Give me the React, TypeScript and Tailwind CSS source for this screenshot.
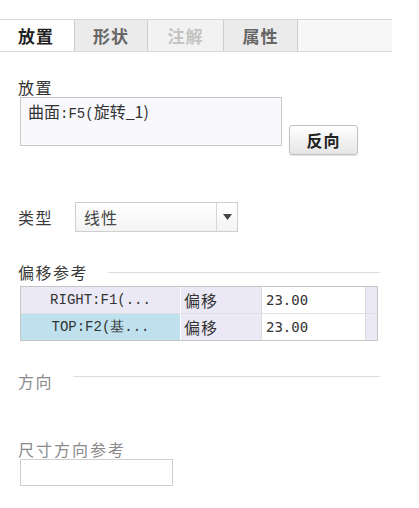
import React from 'react';

const cjk = "font-['Noto_Sans_CJK_SC',sans-serif]";

function SectionHead({ label, muted, lineTop }: { label: string; muted?: boolean; lineTop?: boolean }) {
  return (
    <div className={`flex w-[362px] ${lineTop ? 'items-start' : 'items-center'}`}>
      <span className={`text-[16px] leading-[20px] tracking-[1.5px] ${muted ? 'text-[#8a8a8a]' : 'text-[#3a3a3a]'}`}>
        {label}
      </span>
      <span className={`ml-[20px] h-px flex-1 bg-[#dcdcdc] ${lineTop ? 'mt-[5px]' : ''}`} />
    </div>
  );
}

export default function App() {
  const rows = [
    { ref: 'RIGHT:F1(...', kind: '偏移', val: '23.00', picked: false },
    { ref: 'TOP:F2(基...', kind: '偏移', val: '23.00', picked: true },
  ];

  return (
    <div className={`w-[419px] h-[508px] bg-white pt-[19px] ${cjk}`}>
      {/* Tabs */}
      <div className="flex w-[392px] h-[33px] border-t border-b border-[#d9d9d9] bg-[#f7f7f7]">
        <div className="w-[74px] bg-white pl-[18px] flex items-center text-[17px] font-bold tracking-[1px] text-[#222]">
          放置
        </div>
        <div className="w-[74px] border-l border-r border-[#cdcdcd] bg-[#ebebeb] flex items-center justify-center text-[17px] font-bold tracking-[1px] text-[#666]">
          形状
        </div>
        <div className="w-[75px] bg-[#f2f2f2] flex items-center justify-center text-[17px] font-bold tracking-[1px] text-[#c4c4c4]">
          注解
        </div>
        <div className="w-[75px] border-l border-r border-[#cdcdcd] bg-[#ebebeb] flex items-center justify-center text-[17px] font-bold tracking-[1px] text-[#666]">
          属性
        </div>
      </div>

      <div className="pl-[18px]">
        {/* Placement */}
        <div className="mt-[25px] text-[16px] leading-[20px] tracking-[1.5px] text-[#333]">放置</div>
        <div className="flex items-start ml-[2px]">
          <div className="w-[262px] h-[49px] border border-[#c9c9c9] bg-[#f9f8fd] pl-[7px] pt-[3px] text-[16px] leading-[20px] text-[#333]">
            曲面<span className="font-['Liberation_Mono',monospace] text-[14px]">:F5(</span>旋转_1)
          </div>
          <button className="mt-[28px] ml-[7px] w-[69px] h-[30px] rounded-[3px] border border-[#c2c2c2] bg-gradient-to-b from-white to-[#e6e6e6] shadow-[0_1px_1px_rgba(0,0,0,0.12)] text-[16px] font-bold tracking-[1px] text-[#222]">
            反向
          </button>
        </div>

        {/* Type */}
        <div className="mt-[47px] flex items-center">
          <span className="w-[57px] text-[16px] leading-[20px] tracking-[1.5px] text-[#3a3a3a]">类型</span>
          <div className="flex w-[163px] h-[30px] border border-[#cfcfcf] bg-gradient-to-b from-white to-[#f3f3f3]">
            <span className="flex-1 pl-[8px] flex items-center text-[16px] tracking-[1px] text-[#444]">线性</span>
            <span className="w-[21px] border-l border-[#d6d6d6] flex items-center justify-center">
              <svg width="9" height="6" viewBox="0 0 9 6">
                <path d="M0 0 H9 L4.5 6 Z" fill="#444" />
              </svg>
            </span>
          </div>
        </div>

        {/* Offset references */}
        <div className="mt-[30px]">
          <SectionHead label="偏移参考" />
        </div>
        <div className="mt-[4px] ml-[2px] w-[358px] border border-[#c6c6c6] bg-[#e0e0e0] flex flex-col gap-px">
          {rows.map((r) => (
            <div key={r.ref} className="flex h-[26px]">
              <div
                className={`w-[160px] flex items-center justify-center font-['Liberation_Mono',monospace] text-[14px] text-[#333] border-r border-white ${
                  r.picked ? 'bg-[#bfe1ee]' : 'bg-[#ebe9f6]'
                }`}
              >
                {r.ref}
              </div>
              <div className="w-[81px] bg-[#ebe9f6] border-r border-[#dcdcdc] pl-[3px] flex items-center text-[16px] tracking-[1px] text-[#333]">
                {r.kind}
              </div>
              <div className="w-[103px] bg-white pl-[4px] flex items-center font-['DejaVu_Sans_Mono',monospace] text-[14px] text-[#333]">
                {r.val}
              </div>
              <div className="flex-1 bg-[#ebe9f6] border-l border-[#dcdcdc]" />
            </div>
          ))}
        </div>

        {/* Direction */}
        <div className="mt-[30px]">
          <SectionHead label="方向" muted lineTop />
        </div>

        <div className="mt-[48px] text-[16px] leading-[20px] tracking-[2px] text-[#8a8a8a]">尺寸方向参考</div>
        <div className="ml-[2px] w-[153px] h-[27px] border border-[#cfcfcf] bg-white" />
      </div>
    </div>
  );
}
